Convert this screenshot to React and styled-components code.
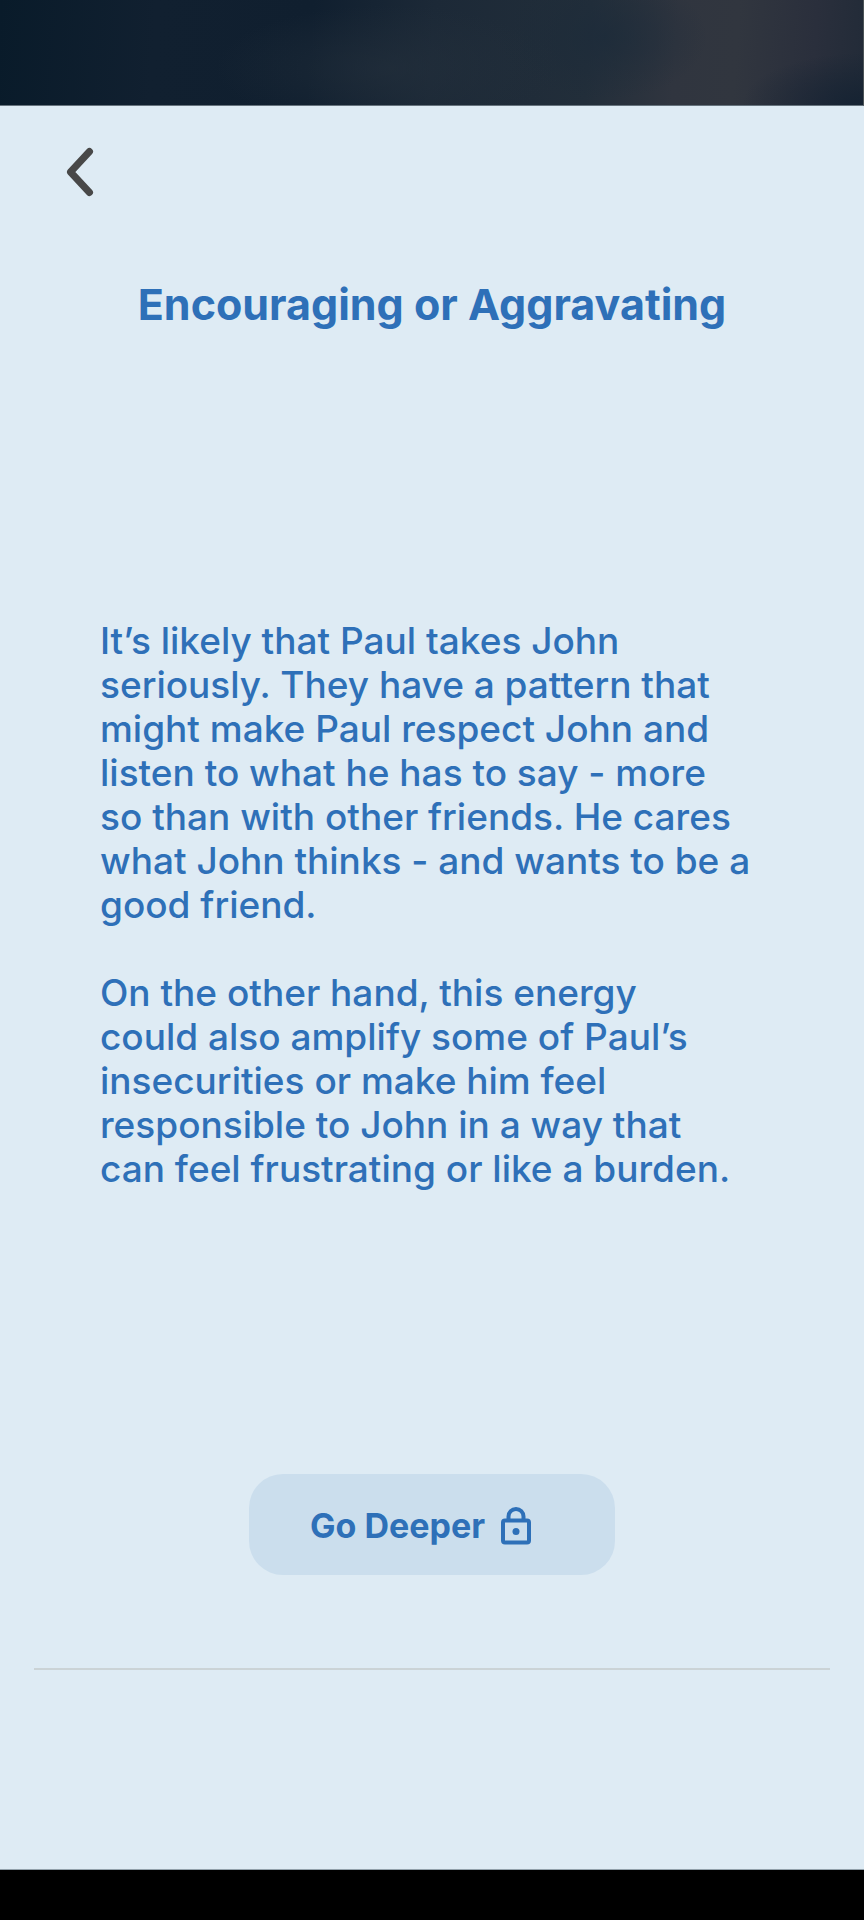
import React from "react";
import styled, { createGlobalStyle } from "styled-components";

const paragraphs = [
  `It’s likely that Paul takes John
seriously. They have a pattern that
might make Paul respect John and
listen to what he has to say - more
so than with other friends. He cares
what John thinks - and wants to be a
good friend.`,
  `On the other hand, this energy
could also amplify some of Paul’s
insecurities or make him feel
responsible to John in a way that
can feel frustrating or like a burden.`
];

const App = () => {
  return (
    <>
      <GlobalStyle />
      <Page>
        <SkyBanner />
        <Content>
          <TopBar>
            <BackButton type="button" aria-label="Back">
              <BackIcon viewBox="0 0 28 52" aria-hidden="true">
                <path d="M23.5 5.5 L4.5 26 L23.5 46.5" />
              </BackIcon>
            </BackButton>
          </TopBar>
          <Title>Encouraging or Aggravating</Title>
          <Reading>
            {paragraphs.map((text) => (
              <Paragraph key={text}>{text}</Paragraph>
            ))}
          </Reading>
          <DeeperButton type="button">
            Go Deeper
            <LockIcon viewBox="0 0 30 38" aria-hidden="true">
              <rect x="2" y="13.5" width="26" height="22" rx="2" />
              <path d="M7.5 13.5 V9.5 a7.5 7.5 0 0 1 15 0 V13.5" />
              <circle cx="15" cy="24.5" r="3.5" />
            </LockIcon>
          </DeeperButton>
          <Divider />
        </Content>
        <BottomBar />
      </Page>
    </>
  );
};

export default App;

const GlobalStyle = createGlobalStyle`
  * {
    box-sizing: border-box;
  }

  body {
    margin: 0;
    background: #deebf4;
    color: #2e70b8;
    font-family: Inter, "Liberation Sans", sans-serif;
  }
`;

const Page = styled.div`
  display: flex;
  flex-direction: column;
  min-height: 100vh;
`;

const SkyBanner = styled.div`
  flex: none;
  height: 106px;
  border-right: 1px solid #4c5457;
  border-bottom: 1px solid #66737d;
  background: radial-gradient(
      ellipse 14% 50% at 100% 100%,
      rgba(20, 34, 50, 0.9),
      transparent
    ),
    radial-gradient(
      ellipse 12% 60% at 70% 35%,
      rgba(28, 43, 58, 0.7),
      transparent
    ),
    radial-gradient(
      ellipse 20% 60% at 45% 65%,
      rgba(36, 48, 60, 0.6),
      transparent
    ),
    linear-gradient(
      94deg,
      #091b2a 0%,
      #112030 18%,
      #101f2f 36%,
      #1c2937 50%,
      #222e3a 68%,
      #30353f 78%,
      #31363f 85%,
      #2a2f3c 94%,
      #222b38 100%
    );
`;

const Content = styled.main`
  flex: 1;
  display: flex;
  flex-direction: column;
  align-items: center;
  padding: 0 34px;
  border-bottom: 1px solid #91a0aa;
`;

const TopBar = styled.div`
  align-self: stretch;
  display: flex;
  padding: 40px 0 0 32px;
`;

const BackButton = styled.button`
  display: flex;
  padding: 0;
  border: none;
  background: none;
  cursor: pointer;
`;

const BackIcon = styled.svg`
  width: 28px;
  height: 52px;
  fill: none;
  stroke: #484848;
  stroke-width: 7;
  stroke-linecap: round;
  stroke-linejoin: round;
`;

const Title = styled.h1`
  margin: 82px 0 0;
  font-size: 43px;
  line-height: 48px;
  font-weight: 700;
  text-align: center;
`;

const Reading = styled.article`
  align-self: stretch;
  display: flex;
  flex-direction: column;
  gap: 44px;
  margin-top: 291px;
  padding: 0 0 0 66px;
`;

const Paragraph = styled.p`
  margin: 0;
  font-size: 37px;
  line-height: 44px;
  font-weight: 500;
  white-space: pre-line;
`;

const DeeperButton = styled.button`
  display: flex;
  align-items: center;
  gap: 16px;
  height: 101px;
  margin-top: 283px;
  padding: 2px 84px 0 61px;
  border: none;
  border-radius: 34px;
  background: #cbdeed;
  color: inherit;
  font-family: inherit;
  font-size: 34px;
  font-weight: 700;
  cursor: pointer;
`;

const LockIcon = styled.svg`
  width: 30px;
  height: 38px;
  fill: none;
  stroke: currentColor;
  stroke-width: 4;

  circle {
    fill: currentColor;
    stroke: none;
  }
`;

const Divider = styled.hr`
  align-self: stretch;
  height: 2px;
  margin: 93px 0 0;
  border: none;
  background: #cbd3d6;
`;

const BottomBar = styled.div`
  flex: none;
  height: 50px;
  background: #000;
`;
